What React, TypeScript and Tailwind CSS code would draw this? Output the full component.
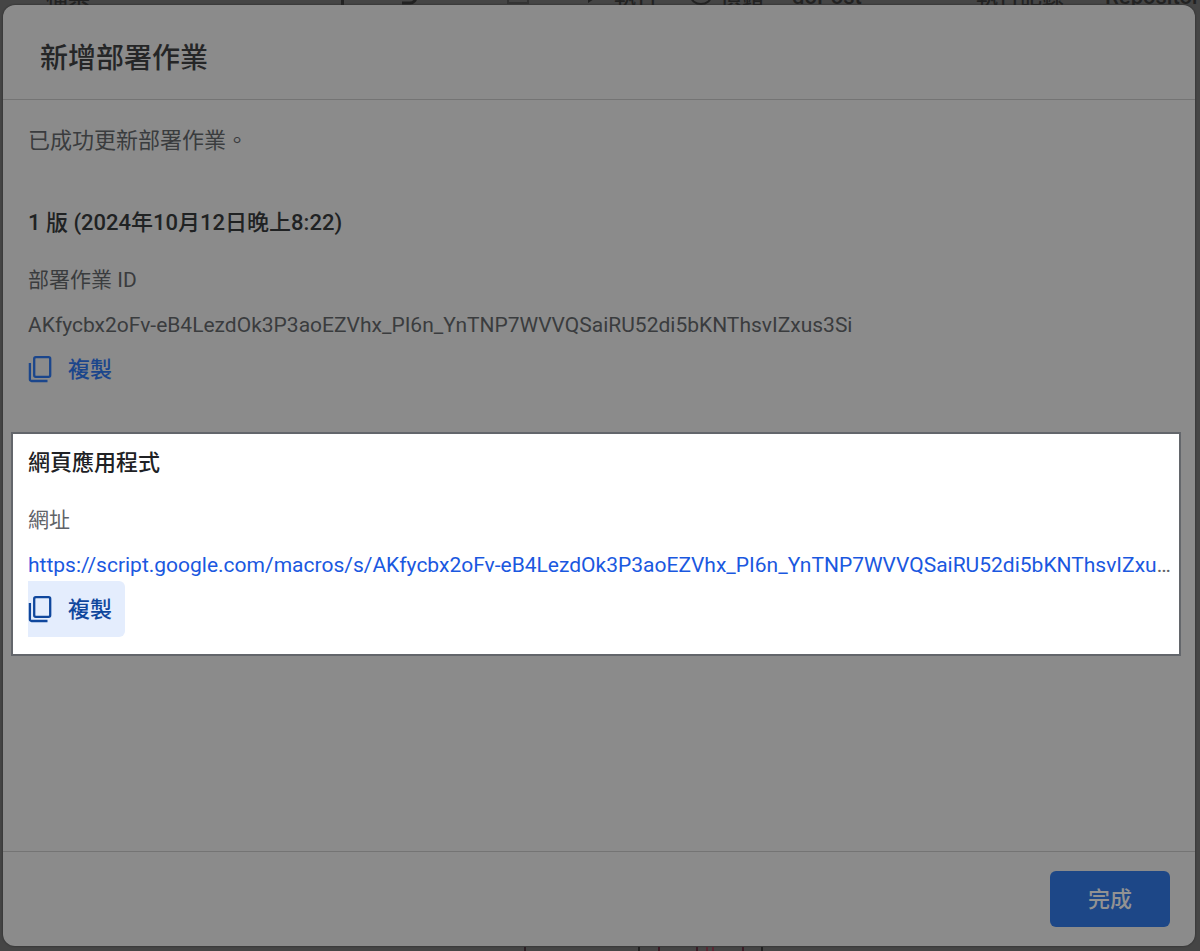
import React from "react";

const DEPLOYMENT_ID = "AKfycbx2oFv-eB4LezdOk3P3aoEZVhx_PI6n_YnTNP7WVVQSaiRU52di5bKNThsvIZxus3Si";
const WEB_APP_URL = `https://script.google.com/macros/s/${DEPLOYMENT_ID}/exec`;

const CopyIcon: React.FC = () => (
  <svg width="24" height="28" viewBox="0 0 24 28" fill="none" stroke="currentColor" strokeWidth="2.3" aria-hidden="true">
    <rect x="6.2" y="2.2" width="16" height="19.6" rx="1.6" />
    <path d="M1.9 8v16.4a1.6 1.6 0 0 0 1.6 1.6H19.5" />
  </svg>
);

interface CopyButtonProps {
  label: string;
  focused?: boolean;
}

const CopyButton: React.FC<CopyButtonProps> = ({ label, focused }) => (
  <button
    type="button"
    aria-label={`複製 ${label}`}
    className={`flex h-14 items-center gap-4 self-start rounded-r-md pr-[13px] text-[22px] font-medium ${
      focused ? "bg-[#e4edfd] text-[#0f479d]" : "text-[#1b468c]"
    }`}
  >
    <CopyIcon />
    <span>複製</span>
  </button>
);

// Editor toolbar peeking out above the dialog
const EditorToolbar: React.FC = () => (
  <div className="relative h-[5px] overflow-hidden text-[22px] leading-6 font-medium text-[#222222]" aria-hidden="true">
    <div className="absolute inset-x-0 bottom-[-4px] flex items-end whitespace-nowrap *:shrink-0">
      <span className="ml-[46px] w-[295px]">檔案</span>
      <span className="h-6 w-[3px] bg-[#222222]" />
      <svg className="ml-14" width="20" height="24" viewBox="0 0 20 24" fill="none" stroke="currentColor" strokeWidth="3">
        <path d="M2 18h8a6 6 0 0 0 6-6" />
      </svg>
      <svg className="ml-[86px]" width="24" height="24" viewBox="0 0 24 24" fill="none" stroke="#333333" strokeWidth="2">
        <path d="M2 4v14h20V4" />
      </svg>
      <svg className="ml-[58px]" width="12" height="24" viewBox="0 0 12 24" fill="currentColor">
        <path d="M0 2l12 8L0 18z" />
      </svg>
      <span className="ml-[14px] w-[76px]">執行</span>
      <svg width="22" height="24" viewBox="0 0 22 24" fill="none" stroke="currentColor" strokeWidth="2">
        <path d="M1 11a10 8 0 0 0 20 0" />
      </svg>
      <span className="ml-2 w-[72px]">偵錯</span>
      <span className="w-[184px]">doPost</span>
      <span className="w-[129px]">執行記錄</span>
      <span>Repositories</span>
    </div>
  </div>
);

// Code lines peeking out below the dialog
const EditorCode: React.FC = () => (
  <div className="flex h-[5px] items-end pl-[524px] *:h-1 *:w-0.5" aria-hidden="true">
    <span className="bg-[#2b1f24]" />
    <span className="ml-[112px] bg-[#222222]" />
    <span className="ml-[18px] bg-[#3b1c26]" />
    <span className="ml-[36px] bg-[#3b1c26]" />
    <span className="ml-[8px] bg-[#5a2733]" />
    <span className="ml-[4px] bg-[#5a2733]" />
    <span className="ml-[28px] bg-[#3b1c26]" />
    <span className="ml-[17px] bg-[#222222]" />
  </div>
);

const App: React.FC = () => {
  return (
    <div
      lang="zh-Hant"
      className="flex min-h-screen flex-col bg-[#454545] font-[Roboto,'Noto_Sans_CJK_TC',sans-serif] text-[#3a3c3e]"
    >
      <EditorToolbar />

      <main
        role="dialog"
        aria-labelledby="dialog-title"
        className="mr-[5px] ml-[3px] flex flex-1 flex-col rounded-xl bg-[#8b8b8b] shadow-[0_0_2px_#222222]"
      >
        <header className="border-b border-[#747474] px-[37px] pt-[33px] pb-5">
          <h1 id="dialog-title" className="text-[28px] leading-[41px] font-medium text-[#252627]">
            新增部署作業
          </h1>
        </header>

        <div className="flex flex-1 flex-col">
          <section className="flex flex-col px-[25px] pt-[25px]">
            <p className="text-[22px] leading-8">已成功更新部署作業。</p>
            <h2 className="mt-[50px] text-[22px] leading-8 font-medium text-[#202223]">
              1 版 (2024年10月12日晚上8:22)
            </h2>
            <h3 className="mt-[25px] text-[21px] leading-8">部署作業 ID</h3>
            <p className="mt-[13px] truncate text-[21px] leading-8">{DEPLOYMENT_ID}</p>
            <CopyButton label="部署作業 ID" />
          </section>

          <section className="mt-[35px] mr-3.5 ml-2 flex flex-col border-2 border-[#63666b] bg-white px-[15px] pt-[13px] pb-[17px] text-[#5f6368]">
            <h2 className="text-[22px] leading-8 font-medium text-[#202124]">網頁應用程式</h2>
            <h3 className="mt-[25px] text-[21px] leading-8">網址</h3>
            <p className="mt-[13px] -mr-2.5 truncate text-[21px] leading-8">
              <a href={WEB_APP_URL} className="text-[#1a58e0]">
                {WEB_APP_URL}
              </a>
            </p>
            <CopyButton label="網址" focused />
          </section>
        </div>

        <footer className="flex justify-end border-t border-[#747474] px-[25px] py-[19px]">
          <button type="button" className="h-14 rounded-md bg-[#1d4787] px-[38px] text-[22px] font-medium text-[#929292]">
            完成
          </button>
        </footer>
      </main>

      <EditorCode />
    </div>
  );
};

export default App;
